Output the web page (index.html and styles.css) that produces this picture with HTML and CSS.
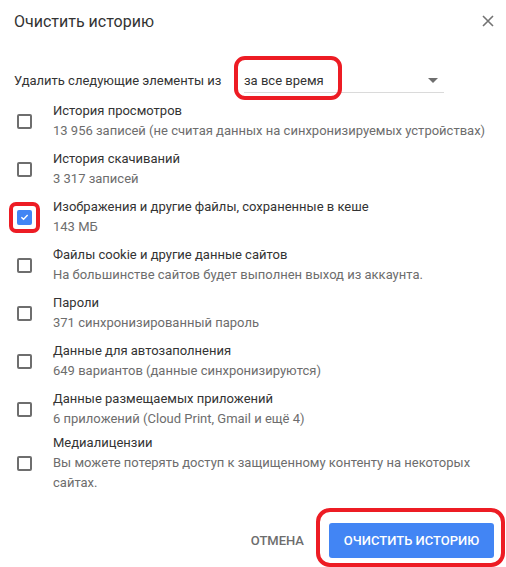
FILE: index.html
```html
<!DOCTYPE html>
<html lang="ru">

<head>
    <meta charset="UTF-8">
    <meta name="viewport" content="width=device-width, initial-scale=1.0">
    <title>Очистить историю</title>
    <link rel="stylesheet" href="styles.css">
</head>

<body>
    <div class="dialog">
        <div class="header">
            <div class="title">Очистить историю</div>
            <button class="close" aria-label="Закрыть">
                <svg width="12" height="12" viewBox="0 0 12 12">
                    <path d="M1 1L11 11M11 1L1 11" stroke="#737373" stroke-width="1.6" fill="none"/>
                </svg>
            </button>
        </div>

        <div class="range">
            <span class="range-label">Удалить следующие элементы из</span>
            <div class="select">
                <span class="select-value marked">за все время</span>
                <span class="arrow"></span>
            </div>
        </div>

        <div class="items">
            <div class="item">
                <span class="checkbox"></span>
                <div class="text">
                    <div class="item-title">История просмотров</div>
                    <div class="item-sub">13 956 записей (не считая данных на синхронизируемых устройствах)</div>
                </div>
            </div>
            <div class="item">
                <span class="checkbox"></span>
                <div class="text">
                    <div class="item-title">История скачиваний</div>
                    <div class="item-sub">3 317 записей</div>
                </div>
            </div>
            <div class="item">
                <span class="checkbox checked marked">
                    <svg width="14" height="14" viewBox="0 0 14 14">
                        <path d="M3 7.2L5.8 10L11 4.6" stroke="#fff" stroke-width="1.8" fill="none"/>
                    </svg>
                </span>
                <div class="text">
                    <div class="item-title">Изображения и другие файлы, сохраненные в кеше</div>
                    <div class="item-sub">143 МБ</div>
                </div>
            </div>
            <div class="item">
                <span class="checkbox"></span>
                <div class="text">
                    <div class="item-title">Файлы cookie и другие данные сайтов</div>
                    <div class="item-sub">На большинстве сайтов будет выполнен выход из аккаунта.</div>
                </div>
            </div>
            <div class="item">
                <span class="checkbox"></span>
                <div class="text">
                    <div class="item-title">Пароли</div>
                    <div class="item-sub">371 синхронизированный пароль</div>
                </div>
            </div>
            <div class="item">
                <span class="checkbox"></span>
                <div class="text">
                    <div class="item-title">Данные для автозаполнения</div>
                    <div class="item-sub">649 вариантов (данные синхронизируются)</div>
                </div>
            </div>
            <div class="item">
                <span class="checkbox"></span>
                <div class="text">
                    <div class="item-title">Данные размещаемых приложений</div>
                    <div class="item-sub">6 приложений (Cloud Print, Gmail и ещё 4)</div>
                </div>
            </div>
            <div class="item">
                <span class="checkbox"></span>
                <div class="text">
                    <div class="item-title">Медиалицензии</div>
                    <div class="item-sub">Вы можете потерять доступ к защищенному контенту на некоторых сайтах.</div>
                </div>
            </div>
        </div>

        <div class="footer">
            <button class="btn-cancel">Отмена</button>
            <button class="btn-primary marked">Очистить историю</button>
        </div>
    </div>
</body>

</html>
```

FILE: styles.css
```css
body {
    font-family: Roboto, "Noto Sans", sans-serif;
    margin: 0;
    background-color: white;
    color: #333333;
}

.dialog {
    width: 506px;
    height: 567px;
    overflow: hidden;
}

.header {
    display: flex;
    justify-content: space-between;
    align-items: center;
    height: 42px;
    padding: 0 12px 0 14px;
}

.title {
    font-size: 16px;
    color: #333333;
    margin-top: 1px;
}

.close {
    border: none;
    background: none;
    padding: 0;
    width: 12px;
    height: 12px;
    display: flex;
    cursor: pointer;
}

.range {
    display: flex;
    align-items: center;
    height: 32px;
    margin-top: 22px;
    padding-left: 14px;
    font-size: 13px;
}

.range-label {
    width: 230px;
}

.select {
    position: relative;
    display: flex;
    align-items: center;
    justify-content: space-between;
    width: 200px;
    height: 24px;
    margin-top: 1px;
    border-bottom: 1px solid #dadada;
}

.arrow {
    width: 0;
    height: 0;
    border-left: 5px solid transparent;
    border-right: 5px solid transparent;
    border-top: 5px solid #6e6e6e;
    margin-right: 6px;
}

.items {
    margin-top: 1px;
}

.item {
    display: flex;
    align-items: center;
    min-height: 48px;
}

.checkbox {
    position: relative;
    box-sizing: border-box;
    width: 15px;
    height: 15px;
    margin: 0 21px 0 17px;
    border: 2px solid #6e6e6e;
    border-radius: 2px;
    flex-shrink: 0;
    display: flex;
    align-items: center;
    justify-content: center;
}

.checkbox.checked {
    background-color: #4285f4;
    border-color: #4285f4;
}

.text {
    font-size: 13px;
    line-height: 20px;
    padding-right: 14px;
}

.item-title {
    color: #333333;
}

.item-sub {
    color: #6d6d6d;
}

.footer {
    display: flex;
    justify-content: flex-end;
    align-items: center;
    padding: 30px 12px 0 0;
}

.footer button {
    font-family: Roboto, "Noto Sans", sans-serif;
    font-size: 13px;
    font-weight: 500;
    text-transform: uppercase;
    border: none;
    height: 35px;
    cursor: pointer;
}

.btn-cancel {
    background: none;
    color: #6d6d6d;
    padding: 0 16px;
    margin-right: 9px;
}

.btn-primary {
    position: relative;
    background-color: #4285f4;
    color: white;
    border-radius: 3px;
    width: 165px;
    padding: 0;
}

/* red hand-drawn marks */
.marked {
    position: relative;
}

.marked::after {
    content: "";
    position: absolute;
    border: 4px solid #ed1c24;
    border-radius: 11px;
    pointer-events: none;
}

.select-value.marked::after {
    top: -17px;
    left: -10px;
    right: -18px;
    bottom: -12px;
}

.checkbox.marked::after {
    top: -10px;
    left: -10px;
    right: -10px;
    bottom: -10px;
    border-radius: 7px;
}

.btn-primary.marked::after {
    top: -15px;
    left: -13px;
    right: -11px;
    bottom: -9px;
    border-radius: 14px;
}
```
